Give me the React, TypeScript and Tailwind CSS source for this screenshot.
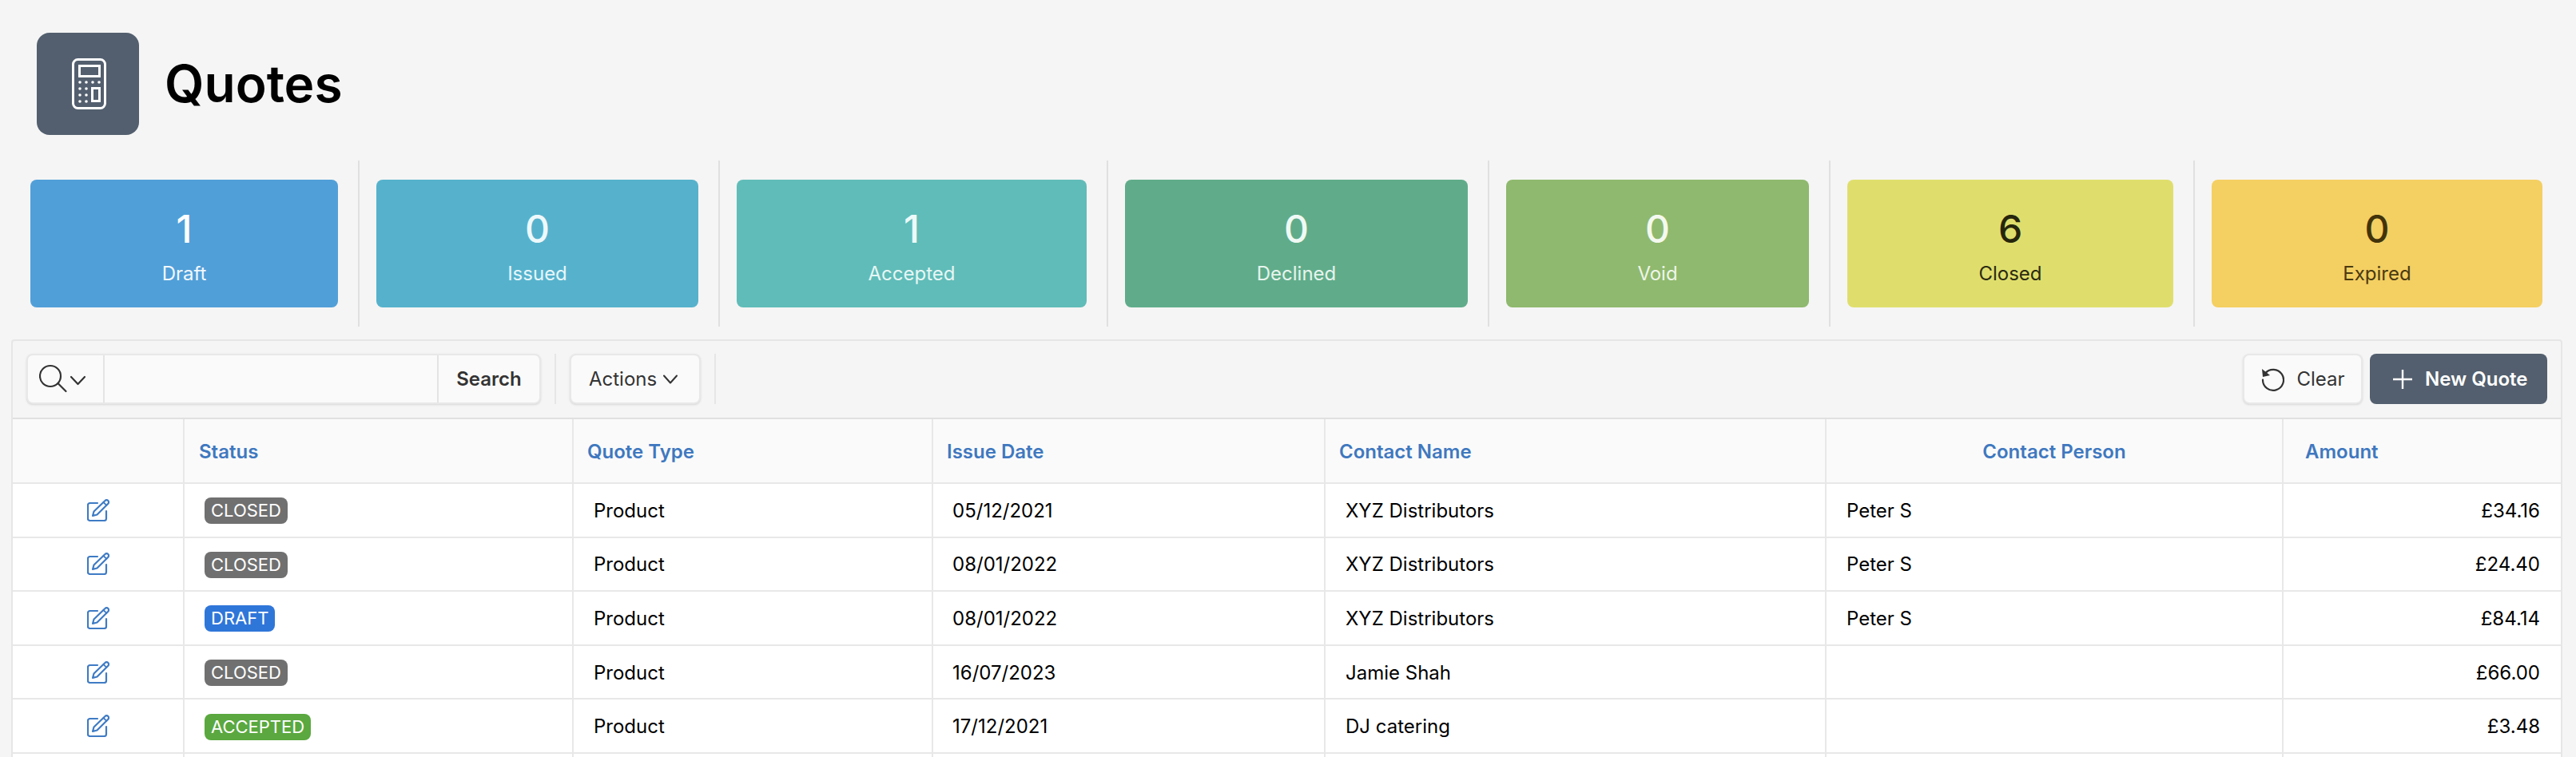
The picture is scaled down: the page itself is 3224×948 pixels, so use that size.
import React from "react";

const stats = [
  { n: "1", l: "Draft", w: "w-[385px]", bg: "bg-[#519fd8]", c: "text-white", lc: "text-[#f1f8fd]" },
  { n: "0", l: "Issued", w: "w-[403px]", bg: "bg-[#56b2cc]", c: "text-[#eef9fc]", lc: "text-[#e6f6fa]" },
  { n: "1", l: "Accepted", w: "w-[438px]", bg: "bg-[#60bcb8]", c: "text-[#eefaf9]", lc: "text-[#e6f6f5]" },
  { n: "0", l: "Declined", w: "w-[429px]", bg: "bg-[#60ac8a]", c: "text-[#f0f9f4]", lc: "text-[#e6f4ed]" },
  { n: "0", l: "Void", w: "w-[379px]", bg: "bg-[#8fb96e]", c: "text-[#f4f9ef]", lc: "text-[#eef5e8]" },
  { n: "6", l: "Closed", w: "w-[408px]", bg: "bg-[#dfde6d]", c: "text-[#26260c]", lc: "text-[#2b2b10]" },
  { n: "0", l: "Expired", w: "w-[414px]", bg: "bg-[#f4cf62]", c: "text-[#42330a]", lc: "text-[#4a3a10]" },
];

const rows = [
  ["CLOSED", "05/12/2021", "XYZ Distributors", "Peter S", "£34.16"],
  ["CLOSED", "08/01/2022", "XYZ Distributors", "Peter S", "£24.40"],
  ["DRAFT", "08/01/2022", "XYZ Distributors", "Peter S", "£84.14"],
  ["CLOSED", "16/07/2023", "Jamie Shah", "", "£66.00"],
  ["ACCEPTED", "17/12/2021", "DJ catering", "", "£3.48"],
];

const badge: Record<string, string> = {
  CLOSED: "bg-[#707070]",
  DRAFT: "bg-[#2f76d9]",
  ACCEPTED: "bg-[#5aa83f]",
};

const cols = "grid grid-cols-[215px_487px_450px_491px_627px_572px_1fr]";
const cell = "border-r-2 border-[#e8e8e8] flex items-center";
const textCell = "border-r-2 border-[#e8e8e8] flex items-center pt-[2px]";

function Calculator() {
  const dots = [
    [100, 103], [108, 103], [116, 103], [124, 103],
    [100, 111], [108, 111], [100, 119], [108, 119], [100, 127], [108, 127],
  ];
  return (
    <svg width="128" height="128" viewBox="46 41 128 128" fill="none" stroke="#fff" strokeWidth="3">
      <rect x="91.5" y="74.5" width="40" height="61" rx="6" />
      <rect x="99.5" y="82.5" width="25" height="13" />
      <rect x="115.5" y="110.5" width="9" height="16" />
      {dots.map(([x, y], i) => (
        <circle key={i} cx={x} cy={y} r="1.8" fill="#fff" stroke="none" />
      ))}
    </svg>
  );
}

function EditIcon() {
  return (
    <svg width="28" height="28" viewBox="0 0 28 28" fill="none" stroke="#3f7bc4" strokeWidth="2.200" strokeLinejoin="round" strokeLinecap="round">
      <path d="M13 5H3.500A2.500 2.500 0 0 0 1 7.500v17A2.500 2.500 0 0 0 3.500 27h18a2.500 2.500 0 0 0 2.500-2.500V15" />
      <path d="M7 21l1.500-5.500L22.500 2a2.600 2.600 0 0 1 3.800 0 2.600 2.600 0 0 1 0 3.700L12.500 19.500z" />
      <path d="M20.500 4l3.800 3.800" strokeWidth="1.800" />
    </svg>
  );
}

function Sep() {
  return <div className="w-[2px] h-[208px] bg-[#e0e0e0] ml-[25px] mr-[21px] shrink-0" />;
}

export default function App() {
  return (
    <div className="h-[948px] w-[3224px] overflow-hidden bg-[#f5f5f5] font-['Inter',sans-serif] text-[24px] text-black">
      <div className="flex items-center pt-[41px] pl-[46px] gap-[32px]">
        <div className="w-[128px] h-[128px] rounded-[16px] bg-[#535f6e]">
          <Calculator />
        </div>
        <h1 className="text-[64px] font-semibold leading-none">Quotes</h1>
      </div>

      <div className="flex items-center pl-[38px] mt-[32px]">
        {stats.map((s, i) => (
          <React.Fragment key={s.l}>
            <div className={`${s.w} ${s.bg} h-[160px] rounded-[8px] flex flex-col items-center shrink-0`}>
              <div className={`${s.c} text-[48px] font-medium leading-none mt-[38px]`}>{s.n}</div>
              <div className={`${s.lc} text-[24px] leading-none mt-[20px]`}>{s.l}</div>
            </div>
            {i < stats.length - 1 && <Sep />}
          </React.Fragment>
        ))}
      </div>

      <div className="ml-[14px] mr-[17px] mt-[16px] border-2 border-[#e6e6e6] rounded-t-[4px]">
        <div className="h-[98px] flex items-start pt-[16px] pl-[17px] pr-[17px] border-b-2 border-[#e0e0e0]">
          <div className="flex h-[63px] w-[644px] rounded-[8px] border-2 border-[#e8e8e8] bg-[#fafafa] shadow-sm overflow-hidden">
            <div className="w-[96px] border-r-2 border-[#e4e4e4] flex items-center pl-[14px] shrink-0">
              <svg width="60" height="40" viewBox="0 0 60 40" fill="none" stroke="#333" strokeWidth="2.200" strokeLinecap="round" strokeLinejoin="round">
                <circle cx="14" cy="16" r="13" />
                <path d="M23.500 25l10 10" />
                <path d="M40 17l8.500 9 8.500-9" />
              </svg>
            </div>
            <div className="flex-1" />
            <div className="w-[128px] border-l-2 border-[#e4e4e4] flex items-center justify-center pt-[1px] font-semibold text-[#333]">Search</div>
          </div>
          <div className="w-[2px] h-[63px] bg-[#e6e6e6] ml-[17px]" />
          <div className="ml-[17px] h-[63px] w-[164px] rounded-[8px] border-2 border-[#e8e8e8] bg-[#fafafa] shadow-sm flex items-center pl-[22px] pt-[1px] gap-[8px] text-[#333]">
            Actions
            <svg width="18" height="12" viewBox="0 0 18 12" fill="none" stroke="#333" strokeWidth="2" strokeLinecap="round" strokeLinejoin="round">
              <path d="M1 1.500l8 9 8-9" />
            </svg>
          </div>
          <div className="w-[2px] h-[63px] bg-[#e6e6e6] ml-[17px]" />
          <div className="ml-auto h-[63px] w-[150px] rounded-[8px] border-2 border-[#e8e8e8] bg-[#fafafa] shadow-sm flex items-center justify-center pt-[1px] gap-[15px] text-[#333]">
            <svg width="30" height="30" viewBox="0 0 30 30" fill="none" stroke="#333" strokeWidth="2.200">
              <path d="M6 7.500A13 13 0 1 1 3 15.500" strokeLinecap="round" />
              <path d="M2 2l1 10 9-2z" fill="#333" stroke="none" />
            </svg>
            Clear
          </div>
          <div className="ml-[9px] h-[63px] w-[222px] rounded-[8px] bg-[#535f6e] flex items-center pl-[29px] pt-[1px] gap-[16px] font-semibold text-white">
            <svg width="24" height="24" viewBox="0 0 24 24" fill="none" stroke="#fff" strokeWidth="2.400">
              <path d="M12 0v24M0 12h24" />
            </svg>
            New Quote
          </div>
        </div>

        <div className={`${cols} h-[81px] bg-[#fafafa] border-b-2 border-[#e8e8e8] font-semibold text-[#3f78bf]`}>
          <div className={cell} />
          <div className={`${textCell} pl-[18px]`}>Status</div>
          <div className={`${textCell} pl-[17px]`}>Quote Type</div>
          <div className={`${textCell} pl-[17px]`}>Issue Date</div>
          <div className={`${textCell} pl-[17px]`}>Contact Name</div>
          <div className={`${textCell} justify-center`}>Contact Person</div>
          <div className="flex items-center pl-[27px] pt-[2px]">Amount</div>
        </div>

        {rows.map((r, i) => (
          <div key={i} className={`${cols} h-[67.6px] bg-white border-b-2 border-[#e8e8e8]`}>
            <div className={`${cell} justify-center`}>
              <EditIcon />
            </div>
            <div className={`${textCell} pl-[25px]`}>
              <span className={`${badge[r[0]]} h-[33px] px-[8px] rounded-[8px] text-white text-[22px] leading-[33px]`}>{r[0]}</span>
            </div>
            <div className={`${textCell} pl-[25px]`}>Product</div>
            <div className={`${textCell} pl-[24px]`}>{r[1]}</div>
            <div className={`${textCell} pl-[25px]`}>{r[2]}</div>
            <div className={`${textCell} pl-[25px]`}>{r[3]}</div>
            <div className="flex items-center justify-end pr-[26px] pt-[2px]">{r[4]}</div>
          </div>
        ))}
        <div className={`${cols} h-[67.6px] bg-white`}>
          <div className={cell} />
          <div className={cell} />
          <div className={cell} />
          <div className={cell} />
          <div className={cell} />
          <div className={cell} />
          <div />
        </div>
      </div>
    </div>
  );
}
